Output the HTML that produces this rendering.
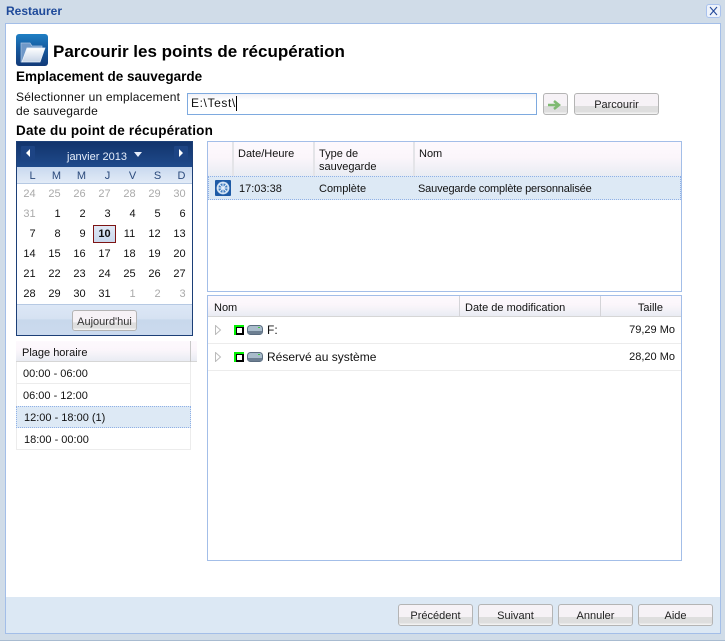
<!DOCTYPE html>
<html lang="fr"><head><meta charset="utf-8"><title>Restaurer</title>
<style>
html,body{margin:0;padding:0;background:#fff}
body{width:725px;height:644px;position:relative;overflow:hidden;font-family:"Liberation Sans",sans-serif;font-size:12px;color:#111}
.a,.t{position:absolute}
.t{white-space:nowrap;line-height:14px}
.s{font-size:11px}
.b{font-weight:bold;font-size:13.5px;letter-spacing:.2px;color:#000}
.btn{position:absolute;box-sizing:border-box;height:22px;border:1px solid #b4b4b4;border-radius:3px;background:linear-gradient(#f6f2f6 0,#f6f2f6 59%,#dedede 60%,#dedede 92%,#f2f2f2 93%);text-align:center;line-height:22px;font-size:11px;color:#222}
.day{position:absolute;width:25px;text-align:center;line-height:14px;font-size:11px;color:#111}
.g{color:#aaa}
.dow{position:absolute;width:25px;text-align:center;top:170px;font-size:11px;color:#2b4a7c;line-height:13px}
.hd{position:absolute;background:linear-gradient(#fdf9fd,#fbf6fb 45%,#e9ecf3);border-bottom:1px solid #d6d6d6;box-sizing:border-box}
.v{position:absolute;width:2px;background:#e4e4e8}
.ln{position:absolute;height:2px;background:#ececec}
.sel{position:absolute;box-sizing:border-box;background:#dde9f5;border:1px dotted #8fb0e6}
</style></head><body>

<div class="a" style="left:0;top:0;width:725px;height:641px;background:#d0dce8;border-bottom:1px solid #a8bbd0;box-sizing:border-box"></div>
<div class="t" style="left:6px;top:4px;font-weight:bold;font-size:12px;color:#1f4a9a">Restaurer</div>
<div class="a" style="left:706px;top:4px;width:15px;height:14px;box-sizing:border-box;border:1px solid #a9c2ee;border-radius:3px;background:#eef3fb">
<svg width="13" height="12" style="display:block"><path d="M3 2 L10 10 M10 2 L3 10" stroke="#24499a" stroke-width="1.1"/></svg></div>

<div class="a" style="left:5px;top:23px;width:716px;height:611px;box-sizing:border-box;border:1px solid #a3bee8;background:#fff"></div>
<div class="a" style="left:6px;top:597px;width:714px;height:36px;background:#dce8f4"></div>

<svg class="a" style="left:16px;top:34px" width="32" height="32" viewBox="0 0 32 32">
<defs><linearGradient id="fg" x1="0" y1="0" x2="0" y2="1"><stop offset="0" stop-color="#1f7fc4"/><stop offset=".45" stop-color="#165a9f"/><stop offset="1" stop-color="#123a78"/></linearGradient>
<linearGradient id="ff" x1="0" y1="0" x2="0" y2="1"><stop offset="0" stop-color="#fff"/><stop offset="1" stop-color="#c5d3e6"/></linearGradient></defs>
<rect width="32" height="32" rx="3" fill="url(#fg)"/>
<path d="M5 28 V9 H14 L16 12 H26 V14 H11 L6 28 Z" fill="#6f98c8" stroke="#a9c4e2" stroke-width=".7"/>
<path d="M6 28 L11 14 H29 L24 28 Z" fill="url(#ff)" stroke="#eaf1f9" stroke-width=".7"/>
</svg>
<div class="t" style="left:53px;top:42px;font-weight:bold;font-size:17px;line-height:20px;color:#000">Parcourir les points de récupération</div>
<div class="t b" style="left:16px;top:70px;letter-spacing:0">Emplacement de sauvegarde</div>
<div class="t" style="left:16px;top:90px;letter-spacing:.2px">Sélectionner un emplacement</div>
<div class="t" style="left:16px;top:104px;letter-spacing:.2px">de sauvegarde</div>
<div class="a" style="left:187px;top:93px;width:350px;height:22px;box-sizing:border-box;border:1px solid #7eaadf;background:linear-gradient(#f0f0f6,#fff 30%)"></div>
<div class="t" style="left:191px;top:96px;font-size:12px;letter-spacing:.6px;color:#111">E:\Test\</div>
<div class="a" style="left:236px;top:96px;width:1px;height:15px;background:#000"></div>
<div class="btn" style="left:543px;top:93px;width:25px"><svg width="23" height="20" style="display:block"><path d="M4 11 H14 M10 7 L15 11 L10 15" fill="none" stroke="#7fba72" stroke-width="2.5"/></svg></div>
<div class="btn" style="left:574px;top:93px;width:85px">Parcourir</div>
<div class="t b" style="left:16px;top:124px">Date du point de récupération</div>

<!-- Calendar -->
<div class="a" style="left:16px;top:141px;width:177px;height:195px;box-sizing:border-box;border:1px solid #1c3f77;background:#fff"></div>
<div class="a" style="left:17px;top:142px;width:175px;height:25px;background:linear-gradient(#12346c,#1f4a8b)"></div>
<svg class="a" style="left:21px;top:146px" width="16" height="16"><rect width="14" height="14" fill="#1d4484" rx="1"/><path d="M9 3 L5 7 L9 11 Z" fill="#fff"/></svg>
<svg class="a" style="left:174px;top:146px" width="16" height="16"><rect width="14" height="14" fill="#1d4484" rx="1"/><path d="M5 3 L9 7 L5 11 Z" fill="#fff"/></svg>
<div class="t s" style="left:67px;top:150px;color:#e6eefb">janvier 2013</div>
<svg class="a" style="left:134px;top:152px" width="9" height="6"><path d="M0 0 H8 L4 5 Z" fill="#e6eefb"/></svg>
<div class="a" style="left:17px;top:167px;width:175px;height:17px;background:linear-gradient(#c9d9ef,#e2ebf7);border-bottom:1px solid #b6c9e3;box-sizing:border-box"></div>
<div class="dow" style="left:20px">L</div><div class="dow" style="left:44px">M</div><div class="dow" style="left:69px">M</div><div class="dow" style="left:95px">J</div><div class="dow" style="left:120px">V</div><div class="dow" style="left:145px">S</div><div class="dow" style="left:169px">D</div>

<div class="day g" style="left:17px;top:187px">24</div><div class="day g" style="left:42px;top:187px">25</div><div class="day g" style="left:67px;top:187px">26</div><div class="day g" style="left:92px;top:187px">27</div><div class="day g" style="left:117px;top:187px">28</div><div class="day g" style="left:142px;top:187px">29</div><div class="day g" style="left:167px;top:187px">30</div>
<div class="day g" style="left:17px;top:207px">31</div><div class="day" style="left:45px;top:207px">1</div><div class="day" style="left:70px;top:207px">2</div><div class="day" style="left:95px;top:207px">3</div><div class="day" style="left:120px;top:207px">4</div><div class="day" style="left:145px;top:207px">5</div><div class="day" style="left:170px;top:207px">6</div>
<div class="day" style="left:20px;top:227px">7</div><div class="day" style="left:45px;top:227px">8</div><div class="day" style="left:70px;top:227px">9</div>
<div class="a" style="left:93px;top:225px;width:23px;height:18px;box-sizing:border-box;border:1px solid #7d1414;background:linear-gradient(#dfe8f5,#c9d8ec)"></div>
<div class="day" style="left:92px;top:227px;font-weight:bold">10</div><div class="day" style="left:117px;top:227px">11</div><div class="day" style="left:142px;top:227px">12</div><div class="day" style="left:167px;top:227px">13</div>
<div class="day" style="left:17px;top:247px">14</div><div class="day" style="left:42px;top:247px">15</div><div class="day" style="left:67px;top:247px">16</div><div class="day" style="left:92px;top:247px">17</div><div class="day" style="left:117px;top:247px">18</div><div class="day" style="left:142px;top:247px">19</div><div class="day" style="left:167px;top:247px">20</div>
<div class="day" style="left:17px;top:267px">21</div><div class="day" style="left:42px;top:267px">22</div><div class="day" style="left:67px;top:267px">23</div><div class="day" style="left:92px;top:267px">24</div><div class="day" style="left:117px;top:267px">25</div><div class="day" style="left:142px;top:267px">26</div><div class="day" style="left:167px;top:267px">27</div>
<div class="day" style="left:17px;top:287px">28</div><div class="day" style="left:42px;top:287px">29</div><div class="day" style="left:67px;top:287px">30</div><div class="day" style="left:92px;top:287px">31</div><div class="day g" style="left:120px;top:287px">1</div><div class="day g" style="left:145px;top:287px">2</div><div class="day g" style="left:170px;top:287px">3</div>

<div class="a" style="left:17px;top:304px;width:175px;height:31px;background:linear-gradient(#dce7f6,#d6e2f2 45%,#c8d8ec 50%,#cbdaee);border-top:1px solid #b6c9e3;box-sizing:border-box"></div>
<div class="btn" style="left:72px;top:310px;width:65px;height:21px;color:#333">Aujourd'hui</div>

<!-- Time ranges -->
<div class="hd" style="left:16px;top:341px;width:181px;height:21px"></div>
<div class="v" style="left:190px;top:341px;height:21px;width:1px;background:#c8c8c8"></div>
<div class="t s" style="left:22px;top:346px">Plage horaire</div>
<div class="a" style="left:16px;top:362px;width:1px;height:88px;background:#ececec"></div>
<div class="a" style="left:190px;top:362px;width:1px;height:88px;background:#ececec"></div>
<div class="ln" style="left:16px;top:383px;width:175px;height:1px"></div>
<div class="ln" style="left:16px;top:449px;width:175px;height:1px"></div>
<div class="sel" style="left:16px;top:406px;width:175px;height:22px"></div>
<div class="t s" style="left:23px;top:367px">00:00 - 06:00</div>
<div class="t s" style="left:23px;top:389px">06:00 - 12:00</div>
<div class="t s" style="left:24px;top:411px">12:00 - 18:00 (1)</div>
<div class="t s" style="left:24px;top:433px">18:00 - 00:00</div>

<!-- Upper grid -->
<div class="a" style="left:207px;top:141px;width:475px;height:151px;box-sizing:border-box;border:1px solid #a3bee8"></div>
<div class="hd" style="left:208px;top:142px;width:473px;height:34px;border-bottom:0"></div>
<div class="v" style="left:232px;top:142px;height:34px"></div>
<div class="v" style="left:313px;top:142px;height:34px"></div>
<div class="v" style="left:413px;top:142px;height:34px"></div>
<div class="t s" style="left:238px;top:147px">Date/Heure</div>
<div class="t s" style="left:319px;top:147px">Type de</div>
<div class="t s" style="left:319px;top:160px">sauvegarde</div>
<div class="t s" style="left:419px;top:147px">Nom</div>
<div class="sel" style="left:208px;top:176px;width:473px;height:24px"></div>
<svg class="a" style="left:215px;top:180px" width="16" height="16" viewBox="0 0 16 16">
<rect width="16" height="16" fill="#1e5ba6" rx="1"/><circle cx="8" cy="8" r="6.4" fill="#cfe0f2"/><circle cx="8" cy="8" r="4.6" fill="#3f7cc0"/>
<path d="M8 2 V14 M2 8 H14 M4 4 L12 12 M12 4 L4 12" stroke="#e4eef9" stroke-width="1"/><circle cx="8" cy="8" r="1.8" fill="#e4eef9"/></svg>
<div class="t s" style="left:239px;top:182px">17:03:38</div>
<div class="t s" style="left:319px;top:182px">Complète</div>
<div class="t s" style="left:418px;top:182px;letter-spacing:-.15px">Sauvegarde complète personnalisée</div>

<!-- Lower grid -->
<div class="a" style="left:207px;top:295px;width:475px;height:266px;box-sizing:border-box;border:1px solid #a3bee8"></div>
<div class="hd" style="left:208px;top:296px;width:473px;height:21px"></div>
<div class="v" style="left:459px;top:296px;height:21px;width:1px;background:#d4d4d8"></div>
<div class="v" style="left:600px;top:296px;height:21px;width:1px;background:#d4d4d8"></div>
<div class="t s" style="left:214px;top:301px">Nom</div>
<div class="t s" style="left:465px;top:301px">Date de modification</div>
<div class="t s" style="right:62px;top:301px">Taille</div>
<div class="ln" style="left:208px;top:343px;width:473px;height:1px"></div>
<div class="ln" style="left:208px;top:370px;width:473px;height:1px"></div>

<svg class="a" style="left:214px;top:325px" width="8" height="10"><path d="M1.5 .5 L6.5 5 L1.5 9.5 Z" fill="#fff" stroke="#bbb"/></svg>
<svg class="a" style="left:234px;top:325px" width="10" height="10"><rect width="10" height="10" fill="#00f000"/><rect x="2" y="2" width="8" height="8" fill="#000"/><rect x="3" y="3" width="5" height="5" fill="#fff"/></svg>
<svg class="a" style="left:247px;top:325px" width="16" height="10"><rect x=".5" y=".5" width="15" height="9" rx="3" fill="#a9bccb" stroke="#5b6d80"/><rect x="1" y="6" width="14" height="3" fill="#6d7f92"/><rect x="11" y="2" width="2" height="1" fill="#3ec63e"/></svg>
<div class="t" style="left:267px;top:323px">F:</div>
<div class="t s" style="right:50px;top:323px">79,29 Mo</div>

<svg class="a" style="left:214px;top:352px" width="8" height="10"><path d="M1.5 .5 L6.5 5 L1.5 9.5 Z" fill="#fff" stroke="#bbb"/></svg>
<svg class="a" style="left:234px;top:352px" width="10" height="10"><rect width="10" height="10" fill="#00f000"/><rect x="2" y="2" width="8" height="8" fill="#000"/><rect x="3" y="3" width="5" height="5" fill="#fff"/></svg>
<svg class="a" style="left:247px;top:352px" width="16" height="10"><rect x=".5" y=".5" width="15" height="9" rx="3" fill="#a9bccb" stroke="#5b6d80"/><rect x="1" y="6" width="14" height="3" fill="#6d7f92"/><rect x="11" y="2" width="2" height="1" fill="#3ec63e"/></svg>
<div class="t" style="left:267px;top:350px">Réservé au système</div>
<div class="t s" style="right:50px;top:350px">28,20 Mo</div>

<!-- Footer buttons -->
<div class="btn" style="left:398px;top:604px;width:75px">Précédent</div>
<div class="btn" style="left:478px;top:604px;width:75px">Suivant</div>
<div class="btn" style="left:558px;top:604px;width:75px">Annuler</div>
<div class="btn" style="left:638px;top:604px;width:75px">Aide</div>
</body></html>
